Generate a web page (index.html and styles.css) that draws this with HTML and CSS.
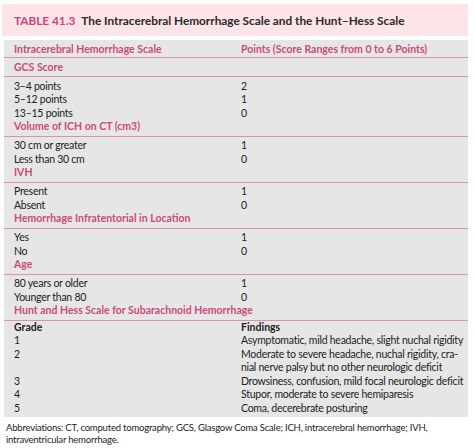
FILE: index.html
```html
<!DOCTYPE html>
<html>
<head>
<meta charset="utf-8">
<link rel="stylesheet" href="styles.css">
</head>
<body>
<div class="page">
  <div class="title"><span class="tnum">TABLE 41.3</span><span class="ttext">The Intracerebral Hemorrhage Scale and the Hunt–Hess Scale</span></div>
  <div class="table">
    <div class="row colhead"><span>Intracerebral Hemorrhage Scale</span><span>Points (Score Ranges from 0 to 6 Points)</span></div>
    <div class="sect gcs">GCS Score</div>
    <div class="group">
      <div class="row"><span>3–4 points</span><span>2</span></div>
      <div class="row"><span>5–12 points</span><span>1</span></div>
      <div class="row"><span>13–15 points</span><span>0</span></div>
      <div class="sect">Volume of ICH on CT (cm3)</div>
    </div>
    <div class="group">
      <div class="row"><span>30 cm or greater</span><span>1</span></div>
      <div class="row"><span>Less than 30 cm</span><span>0</span></div>
      <div class="sect">IVH</div>
    </div>
    <div class="group">
      <div class="row"><span>Present</span><span>1</span></div>
      <div class="row"><span>Absent</span><span>0</span></div>
      <div class="sect">Hemorrhage Infratentorial in Location</div>
    </div>
    <div class="group">
      <div class="row"><span>Yes</span><span>1</span></div>
      <div class="row"><span>No</span><span>0</span></div>
      <div class="sect">Age</div>
    </div>
    <div class="group">
      <div class="row"><span>80 years or older</span><span>1</span></div>
      <div class="row"><span>Younger than 80</span><span>0</span></div>
      <div class="sect">Hunt and Hess Scale for Subarachnoid Hemorrhage</div>
    </div>
    <div class="group last">
      <div class="row bold"><span>Grade</span><span>Findings</span></div>
      <div class="row"><span>1</span><span>Asymptomatic, mild headache, slight nuchal rigidity</span></div>
      <div class="row"><span>2</span><span>Moderate to severe headache, nuchal rigidity, cra-<br>nial nerve palsy but no other neurologic deficit</span></div>
      <div class="row"><span>3</span><span>Drowsiness, confusion, mild focal neurologic deficit</span></div>
      <div class="row"><span>4</span><span>Stupor, moderate to severe hemiparesis</span></div>
      <div class="row"><span>5</span><span>Coma, decerebrate posturing</span></div>
    </div>
  </div>
  <p class="note">Abbreviations: CT, computed tomography; GCS, Glasgow Coma Scale; ICH, intracerebral hemorrhage; IVH,<br>intraventricular hemorrhage.</p>
</div>
</body>
</html>
```

FILE: styles.css
```css
html, body {
  margin: 0;
  padding: 0;
  background: #ffffff;
}
body {
  font-family: Lato, "Open Sans", sans-serif;
  color: #222222;
}
.page {
  width: 466px;
  margin-left: 2px;
  padding-top: 4px;
}
.title {
  background: #fce4e7;
  height: 32px;
  display: flex;
  align-items: center;
  padding-left: 12px;
  font-size: 11.8px;
  font-weight: 700;
  color: #2a2a2a;
}
.tnum {
  color: #cf4577;
  margin-right: 6px;
}
.table {
  margin-top: 4px;
  margin-left: 2px;
  background: #e6e6e6;
  font-size: 10.5px;
  line-height: 13.5px;
}
.row {
  display: grid;
  grid-template-columns: 227px 1fr;
  padding-left: 10px;
  white-space: nowrap;
  letter-spacing: -0.25px;
}
.row.colhead {
  padding-top: 2.5px;
  padding-bottom: 0.5px;
  border-bottom: 1.5px solid #d993a8;
  color: #cc4a7c;
  font-weight: 700;
  letter-spacing: 0;
}
.sect {
  padding-left: 10px;
  padding-bottom: 2px;
  border-bottom: 1.5px solid #d993a8;
  color: #cc4a7c;
  font-weight: 700;
}
.sect.gcs {
  padding-top: 3px;
  padding-bottom: 2px;
}
.group {
  padding-top: 2.6px;
}
.group.last {
  padding-top: 0;
  padding-bottom: 2px;
}
.row.bold {
  font-weight: 700;
  letter-spacing: 0;
}
.note {
  margin: 5px 0 0 4px;
  font-size: 9.5px;
  line-height: 12px;
  letter-spacing: -0.2px;
  color: #222222;
}
```
